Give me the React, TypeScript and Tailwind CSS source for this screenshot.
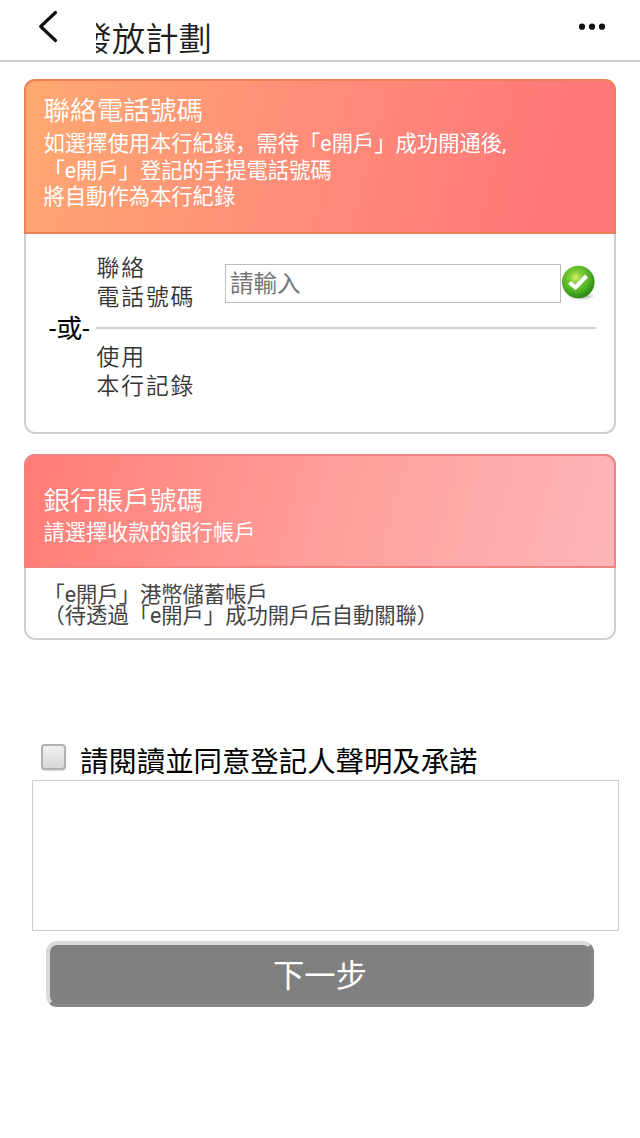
import React from 'react';

const Header: React.FC = () => (
  <header className="flex h-[62px] items-start justify-between border-b-2 border-[#cecece]">
    <div className="flex">
      <svg className="ml-[36px] mt-[8px] h-[38px] w-[24px]" viewBox="0 0 24 38" fill="none">
        <path d="M19.5 4.5 L4.7 18.5 L19.5 32.5" stroke="#111111" strokeWidth="3.2" strokeLinecap="round" strokeLinejoin="round" />
      </svg>
      {/* Long title, only its tail stays visible */}
      <div className="ml-[36px] mt-[20px] flex w-[116px] justify-end overflow-hidden">
        <h1 className="shrink-0 whitespace-nowrap text-[33.4px] font-[350] leading-[40px] text-[#1c1c1c]">發放計劃</h1>
      </div>
    </div>
    <svg className="mr-[34px] mt-[22px] h-[10px] w-[28px]" viewBox="0 0 28 10" fill="#111111">
      <circle cx="4" cy="4.7" r="3.1" />
      <circle cx="14" cy="4.7" r="3.1" />
      <circle cx="24" cy="4.7" r="3.1" />
    </svg>
  </header>
);

const CheckBadge: React.FC = () => (
  <svg className="h-[36px] w-[36px]" viewBox="0 0 36 36">
    <defs>
      <radialGradient id="badge" cx="0.42" cy="0.36" r="0.62">
        <stop offset="0" stopColor="#d8f06a" />
        <stop offset="0.3" stopColor="#7fce38" />
        <stop offset="0.7" stopColor="#4fb022" />
        <stop offset="1" stopColor="#2d8a17" />
      </radialGradient>
      <radialGradient id="shade">
        <stop offset="0" stopColor="#555555" stopOpacity="0.6" />
        <stop offset="1" stopColor="#555555" stopOpacity="0" />
      </radialGradient>
    </defs>
    <ellipse cx="20" cy="31" rx="14" ry="4.5" fill="url(#shade)" />
    <circle cx="17.3" cy="17" r="16.3" fill="url(#badge)" />
    <path d="M8.5 17.5 L14.5 22.5 L25.5 11" fill="none" stroke="#ffffff" strokeWidth="4.2" />
  </svg>
);

const App: React.FC = () => {
  return (
    <div className="h-[1138px] w-[640px] overflow-hidden bg-white font-['Roboto','Noto_Sans_CJK_SC',sans-serif]">
      <Header />

      {/* Contact phone */}
      <section className="mx-6 mt-[17px] h-[355px] rounded-[11px] border-2 border-[#d0d0d0]">
        <div className="-mx-[2px] -mt-[2px] h-[155px] rounded-t-[11px] border-2 border-[#ee8058] bg-linear-[105deg,#ffa970_0%,#ff8e79_45%,#ff7779_90%] pl-[17.5px] pt-[14px] text-white">
          <h2 className="text-[26.6px] font-[350] leading-[32px]">聯絡電話號碼</h2>
          <p className="mt-[4px] whitespace-nowrap text-[21.3px] leading-[26.7px]">
            如選擇使用本行紀錄，需待「e開戶」成功開通後,
            <br />
            「e開戶」登記的手提電話號碼
            <br />
            將自動作為本行紀錄
          </p>
        </div>
        <div className="flex pl-[22px] pt-[20px]">
          <div className="mt-[59px] w-[48px] shrink-0 whitespace-nowrap pl-px text-[26px] leading-[32px] text-black">-或-</div>
          <div className="w-[500px] shrink-0 text-[22.8px] font-[350] leading-[28.5px] tracking-[1.9px] text-[#333333]">
            <div className="flex h-[75px] border-b-2 border-[#d0d0d0]">
              <div className="w-[129px] shrink-0 pl-[0.5px] pt-px">聯絡<br />電話號碼</div>
              <input
                className="mt-[10px] h-[39px] w-[336px] shrink-0 border border-[#bdbdbd] px-[4px] text-[23.5px] font-normal tracking-normal placeholder:text-[#757575]"
                placeholder="請輸入"
              />
              <div className="mt-[11px] shrink-0">
                <CheckBadge />
              </div>
            </div>
            <div className="pl-[0.5px] pt-[15px]">使用<br />本行記錄</div>
          </div>
        </div>
      </section>

      {/* Bank account */}
      <section className="mx-6 mt-[20px] h-[186px] rounded-[11px] border-2 border-[#d0d0d0]">
        <div className="-mx-[2px] -mt-[2px] h-[114px] rounded-t-[11px] border-2 border-[#f28480] bg-linear-[105deg,#ff7c74_0%,#ff9e9b_50%,#ffb6b9_100%] pl-[17.5px] pt-[29px] text-white">
          <h2 className="text-[26.6px] font-[350] leading-[32px]">銀行賬戶號碼</h2>
          <p className="mt-[2px] text-[21.2px] leading-[27px]">請選擇收款的銀行帳戶</p>
        </div>
        <p className="whitespace-nowrap pl-[17.5px] pt-[16px] text-[21.3px] leading-[21.3px] text-[#444444]">
          「e開戶」港幣儲蓄帳戶
          <br />
          （待透過「e開戶」成功開戶后自動關聯）
        </p>
      </section>

      {/* Declaration */}
      <label className="mt-[100px] flex h-[40px] items-start pl-[41px]">
        <span className="mt-[4px] h-[26px] w-[25px] rounded-[4px] border-2 border-[#b0b0b0] bg-linear-to-b from-[#f0f0f0] to-[#d8d8d8] shadow-[0_1px_1px_#dddddd]" />
        <span className="ml-[14px] mt-[5px] whitespace-nowrap text-[28.4px] leading-[36px] text-black">請閱讀並同意登記人聲明及承諾</span>
      </label>
      <div className="ml-[32px] h-[151px] w-[587px] border border-[#cccccc]" />
      <button className="ml-[46px] mt-[10px] block h-[66px] w-[548px] rounded-[11px] border-4 border-b-[#858585] border-l-[#dadada] border-r-[#858585] border-t-[#dadada] bg-[#808080] pt-[5px] text-[31.3px] leading-[40px] text-white">
        下一步
      </button>
    </div>
  );
};

export default App;
